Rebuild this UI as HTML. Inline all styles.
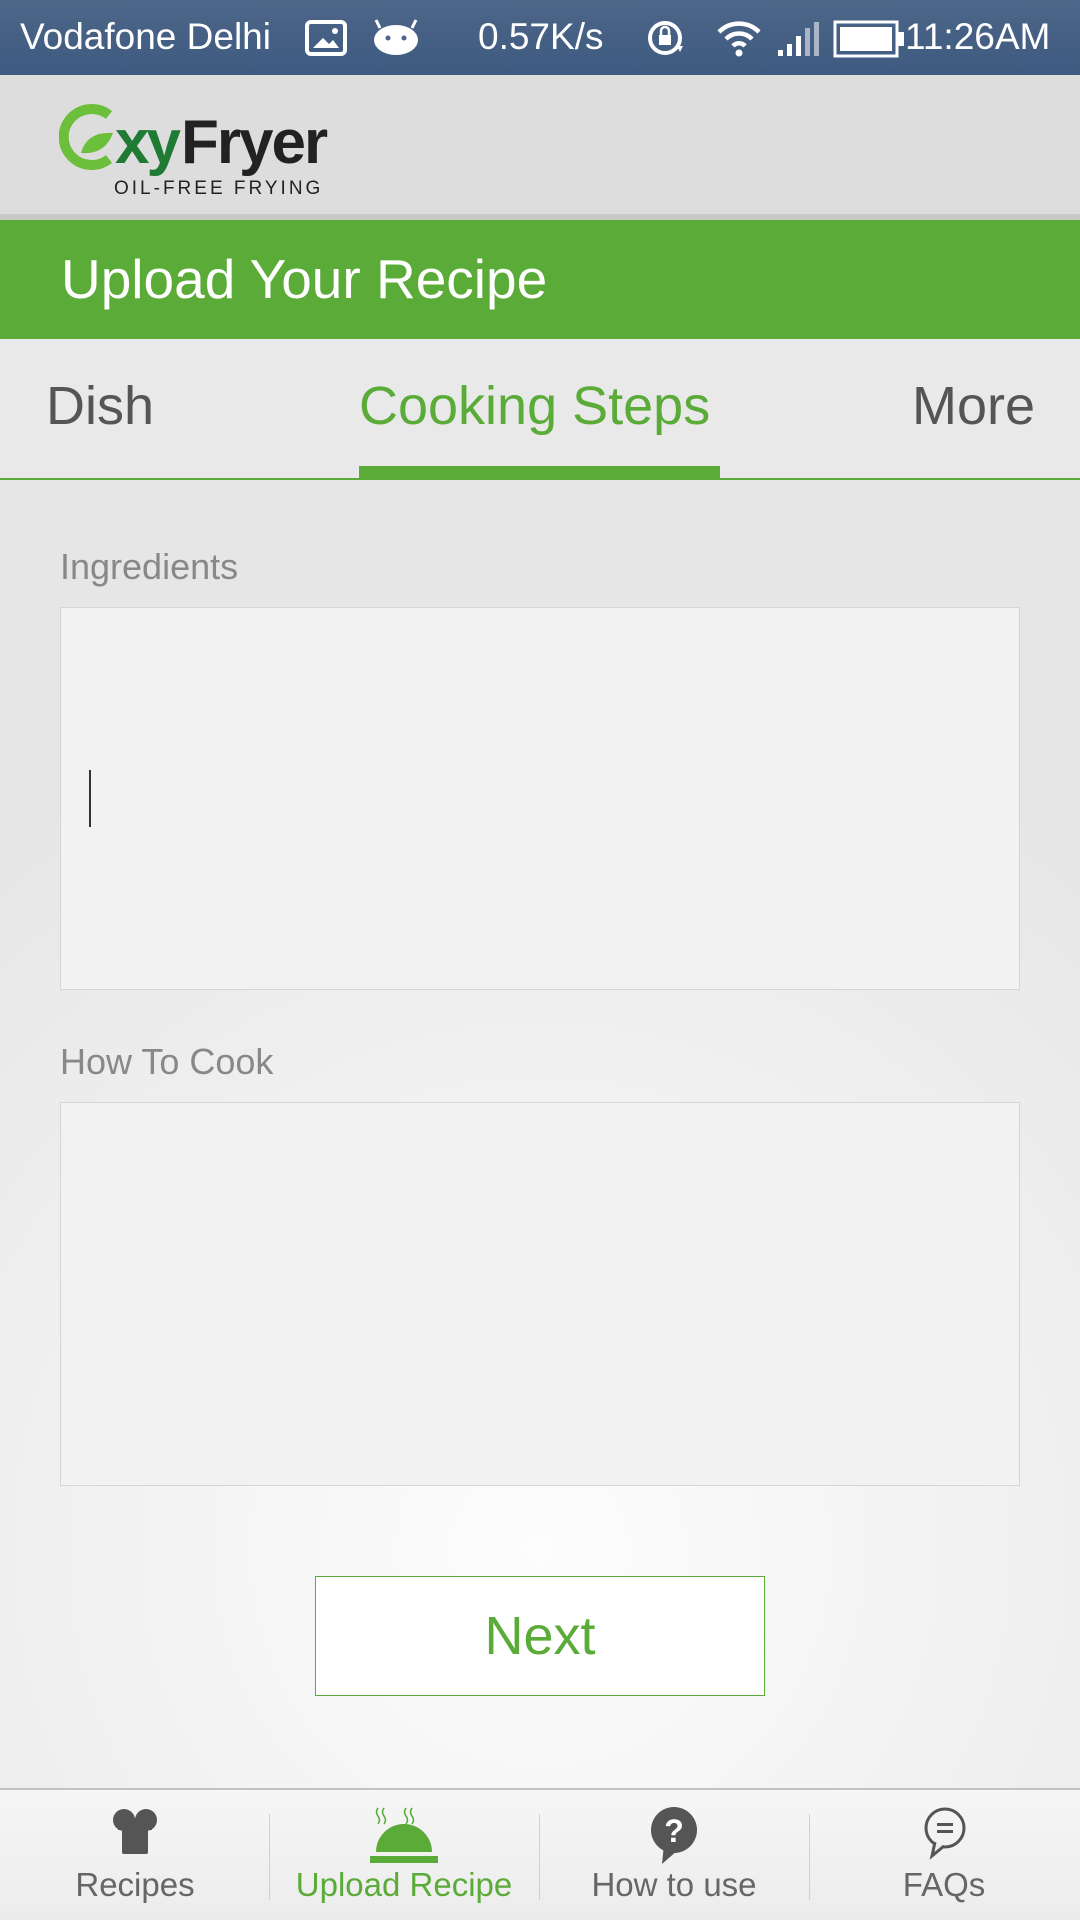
<!DOCTYPE html>
<html><head><meta charset="utf-8"><style>
*{margin:0;padding:0;box-sizing:border-box}
body{width:1080px;height:1920px;overflow:hidden;font-family:"Liberation Sans",sans-serif;background:radial-gradient(ellipse 900px 900px at 540px 1550px,#fdfdfd 0%,#efefef 60%,#e6e6e6 100%);position:relative}
.abs{position:absolute}
#status{left:0;top:0;width:1080px;height:75px;background:linear-gradient(#4d6689,#3e5a80);color:#fff;font-size:37px}
#header{left:0;top:75px;width:1080px;height:139px;background:#dddddd}
#sep{left:0;top:214px;width:1080px;height:6px;background:#c9c9c9}
#green{left:0;top:220px;width:1080px;height:119px;background:#5aab37;color:#fff;font-size:55px;line-height:119px;padding-left:61px}
#tabs{left:0;top:339px;width:1080px;height:141px;border-bottom:2px solid #5aab37;background:#e9e9e9}
.tab{position:absolute;top:36px;font-size:54px;color:#555}
.lbl{position:absolute;left:60px;font-size:36px;color:#888}
.box{position:absolute;left:60px;width:960px;background:#f2f2f2;border:1px solid #d6d6d6}
#next{left:315px;top:1576px;width:450px;height:120px;border:1.5px solid #5aab37;background:#fff;color:#5aab37;font-size:54px;text-align:center;line-height:118px}
#nav{left:0;top:1788px;width:1080px;height:132px;border-top:2px solid #c2c2c2;background:linear-gradient(#f6f6f6,#ececec)}
.ni{position:absolute;top:0;width:270px;height:130px;text-align:center}
.ni span{position:absolute;left:0;right:0;top:76px;font-size:33px;color:#666}
.div{position:absolute;top:24px;width:1px;height:86px;background:#d0d0d0}
</style></head><body>
<div id="status" class="abs">
<span class="abs" style="left:20px;top:16px">Vodafone Delhi</span>
<svg class="abs" style="left:305px;top:20px" width="42" height="36"><rect x="2" y="2" width="38" height="32" rx="4" fill="none" stroke="#fff" stroke-width="4"/><path d="M8 28 L18 18 L24 24 L28 20 L34 28Z" fill="#fff"/><circle cx="30" cy="11" r="3" fill="#fff"/></svg>
<svg class="abs" style="left:372px;top:18px" width="48" height="38"><path d="M8 10 L4 2 M40 10 L44 2" stroke="#fff" stroke-width="3"/><ellipse cx="24" cy="22" rx="22" ry="15" fill="#fff"/><circle cx="16" cy="20" r="2.5" fill="#4d6689"/><circle cx="32" cy="20" r="2.5" fill="#4d6689"/></svg>
<span class="abs" style="left:478px;top:16px">0.57K/s</span>
<svg class="abs" style="left:645px;top:18px" width="42" height="42"><circle cx="20" cy="20" r="15" fill="none" stroke="#fff" stroke-width="4"/><rect x="14" y="17" width="12" height="10" fill="#fff"/><path d="M16 17 v-4 a4 4 0 0 1 8 0 v4" stroke="#fff" stroke-width="2.5" fill="none"/><path d="M32 28 l6 0 l-3 6z" fill="#fff"/></svg>
<svg class="abs" style="left:715px;top:18px" width="48" height="40"><path d="M4 14 A28 28 0 0 1 44 14" stroke="#fff" stroke-width="4.5" fill="none"/><path d="M11 21 A18 18 0 0 1 37 21" stroke="#fff" stroke-width="4.5" fill="none"/><path d="M18 28 A8 8 0 0 1 30 28" stroke="#fff" stroke-width="4.5" fill="none"/><circle cx="24" cy="35" r="3.5" fill="#fff"/></svg>
<svg class="abs" style="left:776px;top:20px" width="46" height="38"><rect x="2" y="30" width="5" height="6" fill="#fff"/><rect x="11" y="24" width="5" height="12" fill="#fff"/><rect x="20" y="16" width="5" height="20" fill="#fff"/><rect x="29" y="8" width="5" height="28" fill="#aab6c8"/><rect x="38" y="2" width="5" height="34" fill="#aab6c8"/></svg>
<svg class="abs" style="left:833px;top:20px" width="74" height="38"><rect x="2" y="2" width="62" height="34" fill="none" stroke="#fff" stroke-width="3"/><rect x="7" y="7" width="52" height="24" fill="#fff"/><rect x="65" y="12" width="6" height="14" fill="#fff"/></svg>
<span class="abs" style="left:905px;top:16px">11:26AM</span>
</div>
<div id="header" class="abs">
<svg class="abs" style="left:59px;top:22px" width="320" height="100">
<path d="M50 18 A28 28 0 1 0 50 62" fill="none" stroke="#6cbf3a" stroke-width="10"/>
<path d="M22 56 Q28 34 54 36 Q46 58 22 56Z" fill="#6cbf3a"/>
<text x="56" y="66" font-family="Liberation Sans" font-weight="bold" font-size="62" fill="#1f7a34" letter-spacing="-3">xy</text>
<text x="122" y="66" font-family="Liberation Sans" font-weight="bold" font-size="62" fill="#222" letter-spacing="-2">Fryer</text>
<text x="55" y="97" font-family="Liberation Sans" font-size="19" fill="#222" letter-spacing="3">OIL-FREE FRYING</text>
</svg>
</div>
<div id="sep" class="abs"></div>
<div id="green" class="abs">Upload Your Recipe</div>
<div id="tabs" class="abs">
<div class="tab" style="left:46px">Dish</div>
<div class="tab" style="left:359px;color:#5aab37">Cooking Steps</div>
<div class="tab" style="right:45px">More</div>
<div class="abs" style="left:359px;top:127px;width:361px;height:12px;background:#5aab37"></div>
</div>
<div class="lbl" style="top:546px">Ingredients</div>
<div class="box" style="top:607px;height:383px"><div class="abs" style="left:28px;top:162px;width:2px;height:57px;background:#333"></div></div>
<div class="lbl" style="top:1041px">How To Cook</div>
<div class="box" style="top:1102px;height:384px"></div>
<div id="next" class="abs">Next</div>
<div id="nav" class="abs">
<div class="ni" style="left:0">
<svg class="abs" style="left:112px;top:18px" width="46" height="50"><circle cx="12" cy="12" r="11" fill="#555"/><circle cx="34" cy="12" r="11" fill="#555"/><rect x="6" y="10" width="34" height="12" fill="#555"/><rect x="10" y="20" width="26" height="26" rx="2" fill="#555"/></svg>
<span>Recipes</span></div>
<div class="div" style="left:269px"></div>
<div class="ni" style="left:269px">
<svg class="abs" style="left:101px;top:16px" width="68" height="58"><path d="M8 2 q-3 4 0 8 q3 4 0 8 M14 2 q-3 4 0 8 q3 4 0 8 M36 2 q-3 4 0 8 q3 4 0 8 M42 2 q-3 4 0 8 q3 4 0 8" stroke="#5aab37" stroke-width="1.6" fill="none"/><circle cx="34" cy="22" r="4" fill="#5aab37"/><path d="M6 46 A28 28 0 0 1 62 46Z" fill="#5aab37"/><rect x="0" y="50" width="68" height="7" fill="#5aab37"/></svg>
<span style="color:#5aab37">Upload Recipe</span></div>
<div class="div" style="left:539px"></div>
<div class="ni" style="left:539px">
<svg class="abs" style="left:111px;top:16px" width="48" height="60"><circle cx="24" cy="24" r="23" fill="#555"/><path d="M14 38 L12 58 L28 44Z" fill="#555"/><text x="24" y="36" text-anchor="middle" font-family="Liberation Sans" font-weight="bold" font-size="32" fill="#fff">?</text></svg>
<span>How to use</span></div>
<div class="div" style="left:809px"></div>
<div class="ni" style="left:809px">
<svg class="abs" style="left:113px;top:16px" width="46" height="56"><circle cx="23" cy="22" r="19" fill="none" stroke="#555" stroke-width="3"/><path d="M13 36 L10 50 L22 40" fill="#eee" stroke="#555" stroke-width="3"/><rect x="15" y="17" width="16" height="3" fill="#555"/><rect x="15" y="24" width="16" height="3" fill="#555"/></svg>
<span>FAQs</span></div>
</div>
</body></html>
